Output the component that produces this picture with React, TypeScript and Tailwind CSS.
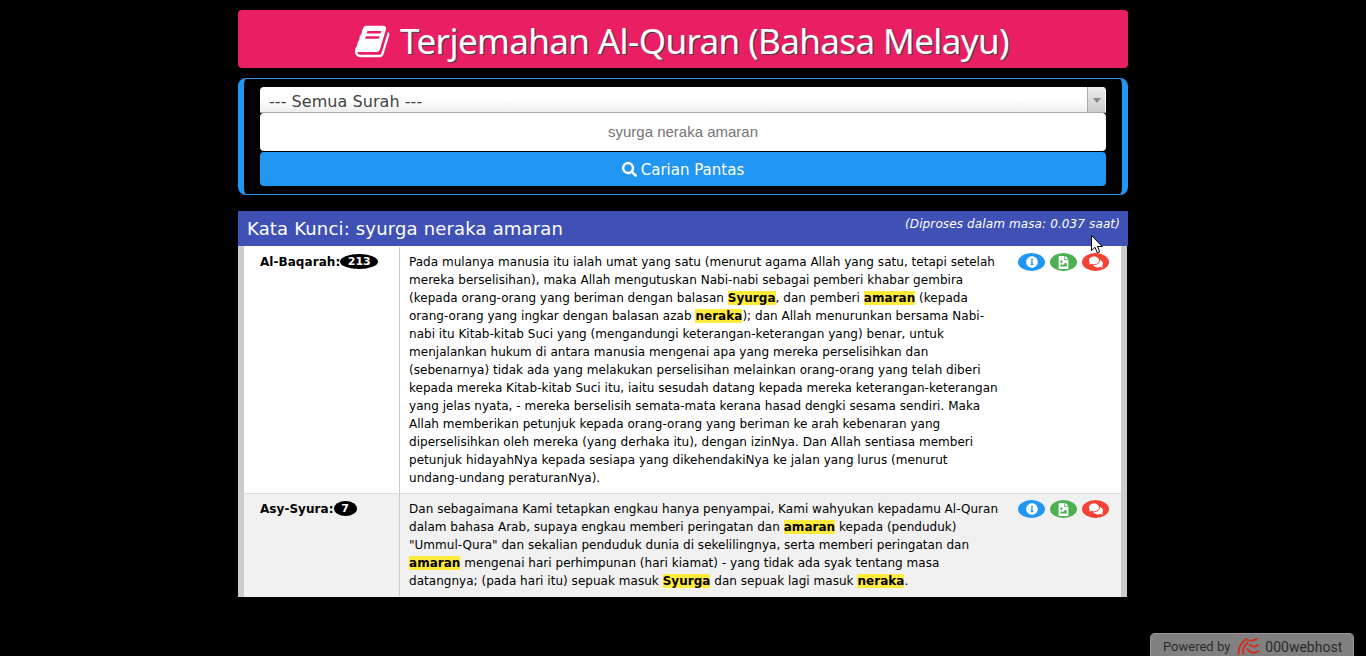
import { FaComments, FaFileImage, FaInfoCircle, FaSearch } from "react-icons/fa";

const verdana = "font-['DejaVu_Sans',sans-serif]";

function Hl({ children }: { children: string }) {
  return <span className="bg-[#ffeb3b] font-bold">{children}</span>;
}

function BookIcon() {
  return (
    <svg viewBox="0 0 1792 1792" className="h-[37px] w-[37px] fill-current">
      <path d="M1639 478q40 57 18 129l-275 906q-19 64-76.5 107.5t-122.5 43.5h-923q-77 0-148.5-53.5t-99.5-131.5q-24-67-2-127 0-4 3-27t4-37q1-8-3-21.5t-3-19.5q2-11 8-21t16.5-23.5 16.5-23.5q23-38 45-91.5t30-91.5q3-10 .5-30t-.5-28q3-11 17-28t17-23q21-36 42-92t25-90q1-9-2.5-32t.5-28q4-13 22-30.5t22-22.5q19-26 42.5-84.5t27.5-96.5q1-8-3-25.5t-2-26.5q2-8 9-18t18-23 17-21q8-12 16.5-30.5t15-35 16-36 19.5-32 26.5-23.5 36-11.5 47.5 5.5l-1 3q38-9 51-9h761q74 0 114 56t18 130l-274 906q-36 119-71.5 153.5t-128.5 34.5h-869q-27 0-38 15-11 16-1 43 24 70 144 70h923q29 0 56-15.5t35-41.5l300-987q7-22 5-57 38 15 59 43zm-1064 2q-4 13 2 22.5t20 9.5h608q13 0 25.5-9.5t16.5-22.5l21-64q4-13-2-22.5t-20-9.5h-608q-13 0-25.5 9.5t-16.5 22.5zm-83 256q-4 13 2 22.5t20 9.5h608q13 0 25.5-9.5t16.5-22.5l21-64q4-13-2-22.5t-20-9.5h-608q-13 0-25.5 9.5t-16.5 22.5z" />
    </svg>
  );
}

function Actions() {
  return (
    <div className="flex w-[118px] shrink-0 gap-[5px] pl-[9px] pt-[6px] text-white">
      <span className="flex h-[18px] w-[27px] items-center justify-center rounded-[50%] bg-[#2196f3]">
        <FaInfoCircle className="text-[12px]" />
      </span>
      <span className="flex h-[18px] w-[27px] items-center justify-center rounded-[50%] bg-[#4caf50]">
        <FaFileImage className="text-[13px]" />
      </span>
      <span className="flex h-[18px] w-[27px] items-center justify-center rounded-[50%] bg-[#f44336]">
        <FaComments className="text-[14px]" />
      </span>
    </div>
  );
}

function Row({ name, num, numW, shade, children }: { name: string; num: string; numW: string; shade?: boolean; children: React.ReactNode }) {
  return (
    <div className={`flex border-b ${shade ? "border-[#f1f1f1] bg-[#f1f1f1]" : "border-[#ddd] bg-white"}`}>
      <div className="flex w-[156px] shrink-0 items-start border-r border-[#ccc] pl-[16px] pt-[6px] text-[12px] font-bold leading-[18px] tracking-[0.05px]">
        {name}:
        <span className={`mt-[1px] flex h-[15px] items-center justify-center rounded-[50%] bg-black text-[11px] text-white ${numW}`}>{num}</span>
      </div>
      <div className="w-[609px] shrink-0 pb-[6px] pl-[9px] pr-[8px] pt-[6px] text-[12px] leading-[18px] tracking-[0.03px]">{children}</div>
      <Actions />
    </div>
  );
}

export default function App() {
  return (
    <div className={`relative h-[656px] overflow-hidden bg-black text-black ${verdana}`}>
      <div className="mx-auto flex w-[890px] flex-col pt-[10px]">
        <h1 className="flex h-[58px] items-center justify-center gap-[8px] rounded-[4px] bg-[#e91e63] pr-[2px] pt-[4px] font-['Noto_Sans',sans-serif] text-[35px] tracking-[-0.6px] text-white [text-shadow:1px_1px_0_#444]">
          <BookIcon />
          Terjemahan Al-Quran (Bahasa Melayu)
        </h1>

        <div className="mt-[10px] h-[117px] rounded-[8px] border border-x-[6px] border-[#2196f3] px-[16px] pt-[8px]">
          <div className="flex h-[26px] items-center justify-between overflow-hidden rounded-t-[4px] border-b border-[#aaa] bg-gradient-to-b from-white from-50% to-[#eee] pl-[9px] pr-[1px] text-[16px] tracking-[0.05px] text-[#444]">
            <span className="pt-[4px]">--- Semua Surah ---</span>
            <span className="flex h-full w-[18px] items-center justify-center border-l border-[#aaa] bg-gradient-to-b from-[#eee] to-[#ccc]">
              <span className="mt-[1px] h-0 w-0 border-x-[4px] border-t-[5px] border-x-transparent border-t-[#888]" />
            </span>
          </div>
          <div className="flex h-[38px] items-center justify-center rounded-[4px] bg-white font-['Liberation_Sans',sans-serif] text-[15px] text-[#757575]">
            syurga neraka amaran
          </div>
          <button className="mt-[1px] flex h-[34px] w-full items-center justify-center gap-[4px] rounded-[4px] bg-[#2196f3] pt-[2px] text-[15px] text-white">
            <FaSearch className="-mt-[1px] text-[15px]" />
            Carian Pantas
          </button>
        </div>

        <div className="mt-[16px] flex h-[35px] justify-between bg-[#3f51b5] pl-[9px] pr-[8px] text-white">
          <span className="pt-[6px] text-[18px] leading-[23px] tracking-[0.17px]">Kata Kunci: syurga neraka amaran</span>
          <span className="pt-[5px] text-[12px] italic leading-[17px] tracking-[0.12px]">(Diproses dalam masa: 0.037 saat)</span>
        </div>

        <div className="w-[889px] border-x-[6px] border-[#ccc] bg-white pt-[1px]">
          <Row name="Al-Baqarah" num="213" numW="w-[38px]">
            Pada mulanya manusia itu ialah umat yang satu (menurut agama Allah yang satu, tetapi setelah mereka berselisihan), maka Allah mengutuskan Nabi-nabi sebagai pemberi khabar gembira (kepada orang-orang yang beriman dengan balasan <Hl>Syurga</Hl>, dan pemberi <Hl>amaran</Hl> (kepada orang-orang yang ingkar dengan balasan azab <Hl>neraka</Hl>); dan Allah menurunkan bersama Nabi-nabi itu Kitab-kitab Suci yang (mengandungi keterangan-keterangan yang) benar, untuk menjalankan hukum di antara manusia mengenai apa yang mereka perselisihkan dan (sebenarnya) tidak ada yang melakukan perselisihan melainkan orang-orang yang telah diberi kepada mereka Kitab-kitab Suci itu, iaitu sesudah datang kepada mereka keterangan-keterangan yang jelas nyata, - mereka berselisih semata-mata kerana hasad dengki sesama sendiri. Maka Allah memberikan petunjuk kepada orang-orang yang beriman ke arah kebenaran yang diperselisihkan oleh mereka (yang derhaka itu), dengan izinNya. Dan Allah sentiasa memberi petunjuk hidayahNya kepada sesiapa yang dikehendakiNya ke jalan yang lurus (menurut undang-undang peraturanNya).
          </Row>
          <Row name="Asy-Syura" num="7" numW="w-[23px]" shade>
            Dan sebagaimana Kami tetapkan engkau hanya penyampai, Kami wahyukan kepadamu Al-Quran dalam bahasa Arab, supaya engkau memberi peringatan dan <Hl>amaran</Hl> kepada (penduduk) "Ummul-Qura" dan sekalian penduduk dunia di sekelilingnya, serta memberi peringatan dan <Hl>amaran</Hl> mengenai hari perhimpunan (hari kiamat) - yang tidak ada syak tentang masa datangnya; (pada hari itu) sepuak masuk <Hl>Syurga</Hl> dan sepuak lagi masuk <Hl>neraka</Hl>.
          </Row>
        </div>
      </div>

      {/* mouse pointer */}
      <svg viewBox="0 0 12 19" className="absolute left-[1091px] top-[235px] h-[19px] w-[12px]">
        <path d="M.5.5v15l3.5-3.2 2.3 5.6 2.4-1-2.3-5.4h4.8z" fill="#fff" stroke="#000" strokeWidth="1" />
      </svg>

      {/* host badge */}
      <div className="absolute left-[1150px] top-[633px] flex h-[23px] w-[204px] items-center rounded-t-[5px] border border-b-0 border-[#999] bg-[#808080] pl-[12px] pt-[4px] font-['Roboto',sans-serif] text-[#2b2b2b]">
        <span className="text-[13px]">Powered by</span>
        <svg viewBox="0 0 24 18" className="-mt-[3px] ml-[6px] mr-[4px] h-[18px] w-[25px]" fill="none" stroke="#d8291c" strokeWidth="1.8" strokeLinecap="round">
          <path d="M2 17C2 10 5 5 10 2" />
          <path d="M7 17c-1-4 0-8 4-11" />
          <path d="M11 3c3 1 6 1 9-1" />
          <path d="M11 12c2 4 6 5 11 2" />
          <path d="M13 8c3 2 6 2 8 0" />
        </svg>
        <span className="text-[14px]">000webhost</span>
      </div>
    </div>
  );
}
